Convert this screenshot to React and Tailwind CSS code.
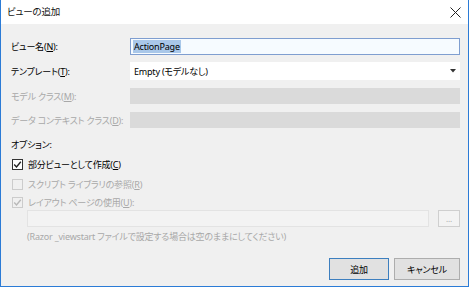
import React from "react";

function Check({ checked, disabled }) {
  return (
    <div
      className={
        "w-[11px] h-[11px] border flex items-center justify-center shrink-0 " +
        (disabled ? "border-[#cccccc] bg-[#f0f0f0]" : "border-[#333333] bg-white")
      }
    >
      {checked && (
        <svg width="9" height="9" viewBox="0 0 9 9">
          <path
            d="M1.2 4.6 L3.5 6.9 L7.8 1.8"
            fill="none"
            stroke={disabled ? "#b8b8b8" : "#222222"}
            strokeWidth="1.4"
          />
        </svg>
      )}
    </div>
  );
}

export default function App() {
  return (
    <div className="w-[469px] h-[287px] bg-white font-['Noto_Sans','Noto_Sans_CJK_JP',sans-serif] [font-feature-settings:'palt'] text-[9px] tracking-[-0.2px] leading-none text-black overflow-hidden whitespace-nowrap">
      <div className="w-full h-full flex flex-col border-x border-b border-[#2b7bd6]">
        {/* title bar */}
        <div className="h-[24px] bg-white flex items-center justify-between pl-[6px] pr-[7px] shrink-0">
          <span className="text-[9.5px] text-[#111]">ビューの追加</span>
          <svg width="11" height="11" viewBox="0 0 11 11">
            <path d="M0.5 0.5 L10.5 10.5 M10.5 0.5 L0.5 10.5" stroke="#222" strokeWidth="1" />
          </svg>
        </div>
        {/* body */}
        <div className="flex-1 bg-[#f0f0f0] flex flex-col pl-[10px] pr-[8px] pt-[14px] pb-[6px]">
          <div className="flex items-center h-[17px]">
            <span className="w-[119px]">ビュー名(<u>N</u>):</span>
            <div className="flex-1 h-[17px] border border-[#7f9ed0] bg-[#f6fbff] flex items-center pl-[2px]">
              <span className="bg-[#a9c7e9] text-black px-[1px] leading-[13px]">ActionPage</span>
            </div>
          </div>
          <div className="flex items-center h-[18px] mt-[7px]">
            <span className="w-[119px]">テンプレート(<u>T</u>):</span>
            <div className="flex-1 h-[18px] bg-white flex items-center justify-between pl-[4px] pr-[4px]">
              <span>Empty (モデルなし)</span>
              <svg width="6" height="4" viewBox="0 0 6 4">
                <path d="M0 0 L6 0 L3 3.5 Z" fill="#333" />
              </svg>
            </div>
          </div>
          <div className="flex items-center h-[16px] mt-[8px] text-[#a8a8a8]">
            <span className="w-[119px]">モデル クラス(<u>M</u>):</span>
            <div className="flex-1 h-[16px] bg-[#dadada]"></div>
          </div>
          <div className="flex items-center h-[16px] mt-[8px] text-[#a8a8a8]">
            <span className="w-[119px]">データ コンテキスト クラス(<u>D</u>):</span>
            <div className="flex-1 h-[16px] bg-[#dadada]"></div>
          </div>
          <div className="mt-[10px] h-[12px] flex items-center">オプション:</div>
          <div className="mt-[8px] flex items-center gap-[5px] pl-[1px] h-[12px]">
            <Check checked />
            <span>部分ビューとして作成(<u>C</u>)</span>
          </div>
          <div className="mt-[8px] flex items-center gap-[5px] pl-[1px] h-[12px] text-[#a8a8a8]">
            <Check disabled />
            <span>スクリプト ライブラリの参照(<u>R</u>)</span>
          </div>
          <div className="mt-[6px] flex items-center gap-[5px] pl-[1px] h-[12px] text-[#a8a8a8]">
            <Check checked disabled />
            <span>レイアウト ページの使用(<u>U</u>):</span>
          </div>
          <div className="mt-[2px] flex items-center pl-[16px] h-[17px]">
            <div className="flex-1 h-[17px] border border-[#e3e3e3] bg-[#f3f3f3]"></div>
            <div className="ml-[9px] w-[22px] h-[17px] border border-[#cfcfcf] bg-[#f3f3f3] flex items-center justify-center text-[#a8a8a8] text-[8px]">
              ...
            </div>
          </div>
          <div className="mt-[3px] pl-[16px] text-[#a8a8a8] h-[12px] flex items-center">
            (Razor _viewstart ファイルで設定する場合は空のままにしてください)
          </div>
          <div className="mt-auto flex justify-end gap-[5px]">
            <button className="w-[60px] h-[22px] border border-[#3d7fbf] bg-[#e1e1e1] flex items-center justify-center">
              追加
            </button>
            <button className="w-[66px] h-[22px] border border-[#adadad] bg-[#e1e1e1] flex items-center justify-center">
              キャンセル
            </button>
          </div>
        </div>
      </div>
    </div>
  );
}
